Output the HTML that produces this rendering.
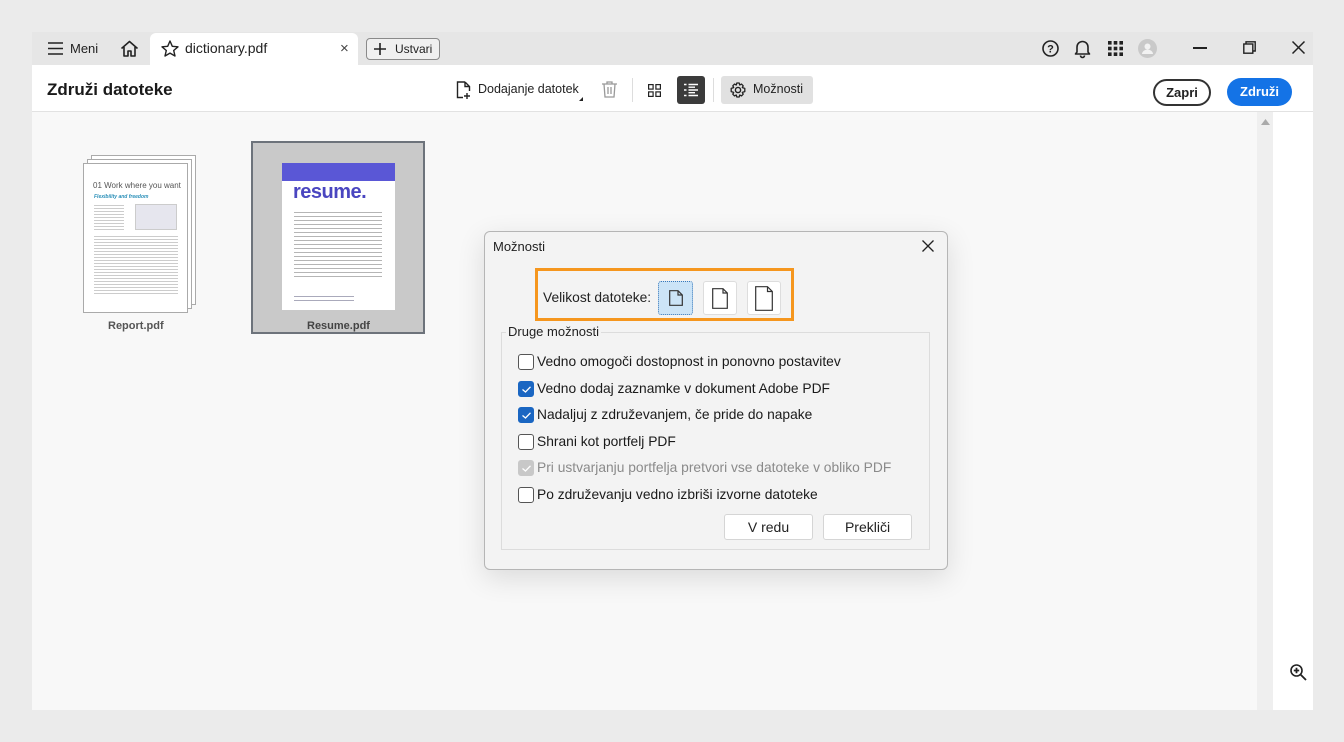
<!DOCTYPE html>
<html><head><meta charset="utf-8">
<style>
*{box-sizing:border-box;margin:0;padding:0}
body{width:1344px;height:742px;background:#ebebeb;font-family:"Liberation Sans",sans-serif;position:relative;overflow:hidden;color:#222}
.a{position:absolute}
.t{position:absolute;white-space:nowrap}
svg{position:absolute;overflow:visible}
.cb{position:absolute;left:518px;width:16px;height:16px;border:1px solid #555;border-radius:3px;background:#fff}
.cb.on{background:#1a66c2;border-color:#1a66c2}
.cb.dis{background:#c8c8c8;border-color:#c8c8c8}
.lbl{position:absolute;left:537px;font-size:13.8px;color:#1a1a1a;white-space:nowrap}
</style></head><body>
<div class="a" style="left:32px;top:32px;width:1281px;height:33px;background:#e6e6e6"></div>
<div class="a" style="left:32px;top:65px;width:1281px;height:47px;background:#fff;border-bottom:1px solid #e2e2e2"></div>
<div class="a" style="left:32px;top:112px;width:1225px;height:598px;background:#f8f8f8"></div>
<div class="a" style="left:1257px;top:112px;width:16px;height:598px;background:#efefef"></div>
<div class="a" style="left:1273px;top:112px;width:40px;height:598px;background:#fff"></div>
<svg style="left:1261px;top:119px" width="9" height="7"><path d="M0 6 L4.5 0 L9 6Z" fill="#aaa"/></svg>

<svg style="left:48px;top:42px" width="15" height="13"><path d="M0 1H15M0 6.5H15M0 12H15" stroke="#222" stroke-width="1.6"/></svg>
<div class="t" style="left:70px;top:41px;font-size:13px">Meni</div>
<svg style="left:120px;top:40px" width="19" height="17"><path d="M1.5 8.5L9.5 1.5L17.5 8.5M4 7V16H8V11H11V16H15V7" stroke="#222" stroke-width="1.6" fill="none" stroke-linejoin="round"/></svg>
<div class="a" style="left:150px;top:33px;width:208px;height:32px;background:#fff;border-radius:6px 6px 0 0"></div>
<svg style="left:161px;top:40px" width="18" height="17"><path d="M9 1L11.3 6.3L17 6.8L12.7 10.5L14 16L9 13.1L4 16L5.3 10.5L1 6.8L6.7 6.3Z" stroke="#222" stroke-width="1.4" fill="none" stroke-linejoin="round"/></svg>
<div class="t" style="left:185px;top:40px;font-size:14px">dictionary.pdf</div>
<div class="t" style="left:340px;top:40px;font-size:15px;color:#444">×</div>
<div class="a" style="left:366px;top:38px;width:74px;height:22px;border:1px solid #8a8a8a;border-radius:4px;background:#f0f0f0"></div>
<svg style="left:374px;top:43px" width="12" height="12"><path d="M6 0V12M0 6H12" stroke="#222" stroke-width="1.6"/></svg>
<div class="t" style="left:395px;top:42px;font-size:12px">Ustvari</div>

<svg style="left:1042px;top:40px" width="17" height="17"><circle cx="8.5" cy="8.5" r="7.5" stroke="#222" stroke-width="1.6" fill="none"/><text x="8.5" y="12.5" font-size="11" font-weight="bold" text-anchor="middle" font-family="Liberation Sans" fill="#222">?</text></svg>
<svg style="left:1074px;top:39px" width="17" height="19"><path d="M3 13V8a5.5 5.5 0 0 1 11 0v5l1.5 2H1.5Z M6.5 16.5a2 2 0 0 0 4 0" stroke="#222" stroke-width="1.6" fill="none" stroke-linejoin="round"/></svg>
<svg style="left:1108px;top:41px" width="15" height="15" fill="#222"><rect x="0" y="0" width="3.6" height="3.6"/><rect x="5.7" y="0" width="3.6" height="3.6"/><rect x="11.4" y="0" width="3.6" height="3.6"/><rect x="0" y="5.7" width="3.6" height="3.6"/><rect x="5.7" y="5.7" width="3.6" height="3.6"/><rect x="11.4" y="5.7" width="3.6" height="3.6"/><rect x="0" y="11.4" width="3.6" height="3.6"/><rect x="5.7" y="11.4" width="3.6" height="3.6"/><rect x="11.4" y="11.4" width="3.6" height="3.6"/></svg>
<svg style="left:1138px;top:39px" width="19" height="19"><circle cx="9.5" cy="9.5" r="9.5" fill="#c9c9c9"/><circle cx="9.5" cy="7.5" r="3" fill="#f2f2f2"/><path d="M4 15a5.5 4.5 0 0 1 11 0Z" fill="#f2f2f2"/></svg>
<div class="a" style="left:1193px;top:47px;width:14px;height:2px;background:#222"></div>
<svg style="left:1243px;top:41px" width="13" height="13"><rect x="0.8" y="3" width="9" height="9.2" stroke="#222" stroke-width="1.4" fill="none"/><path d="M3 3V0.8H12.2V10H10" stroke="#222" stroke-width="1.4" fill="none"/></svg>
<svg style="left:1292px;top:41px" width="13" height="13"><path d="M0.5 0.5L12.5 12.5M12.5 0.5L0.5 12.5" stroke="#222" stroke-width="1.5"/></svg>

<div class="t" style="left:47px;top:80px;font-size:17px;font-weight:bold;color:#1a1a1a">Združi datoteke</div>
<svg style="left:456px;top:81px" width="15" height="18"><path d="M9 1H1.5V16.5H7M9 1L13.5 5.5V10M9 1V5.5H13.5M11 12V18M8 15H14" stroke="#222" stroke-width="1.4" fill="none"/></svg>
<div class="t" style="left:478px;top:82px;font-size:12.5px">Dodajanje datotek</div>
<svg style="left:579px;top:97px" width="4" height="4"><path d="M4 0V4H0Z" fill="#222"/></svg>
<svg style="left:602px;top:81px" width="15" height="17"><path d="M0 3H15M5 3V1H10V3M2 3L3 16H12L13 3M6 6V13M9 6V13" stroke="#999" stroke-width="1.3" fill="none"/></svg>
<div class="a" style="left:632px;top:78px;width:1px;height:24px;background:#ddd"></div>
<svg style="left:648px;top:84px" width="13" height="13"><rect x="0.6" y="0.6" width="4.5" height="4.5" stroke="#222" stroke-width="1.2" fill="none"/><rect x="7.9" y="0.6" width="4.5" height="4.5" stroke="#222" stroke-width="1.2" fill="none"/><rect x="0.6" y="7.9" width="4.5" height="4.5" stroke="#222" stroke-width="1.2" fill="none"/><rect x="7.9" y="7.9" width="4.5" height="4.5" stroke="#222" stroke-width="1.2" fill="none"/></svg>
<div class="a" style="left:677px;top:76px;width:28px;height:28px;background:#3b3b3b;border-radius:3px"></div>
<svg style="left:684px;top:83px" width="14" height="14"><path d="M0 1.5H2.5M0 7H2.5M0 12.5H2.5M4.5 1.5H14M4.5 7H14M4.5 12.5H14M4.5 4.2H11M4.5 9.7H11" stroke="#fff" stroke-width="1.4"/></svg>
<div class="a" style="left:713px;top:78px;width:1px;height:24px;background:#ddd"></div>
<div class="a" style="left:721px;top:76px;width:92px;height:28px;background:#e1e1e1;border-radius:3px"></div>
<svg style="left:730px;top:82px" width="16" height="16"><circle cx="8" cy="8" r="2.6" stroke="#222" stroke-width="1.4" fill="none"/><path d="M6.8 1H9.2L9.7 3L11.5 2.1L13.2 3.8L12.3 5.6L14.8 6.4V9.6L12.3 10.4L13.2 12.2L11.5 13.9L9.7 13L9.2 15H6.8L6.3 13L4.5 13.9L2.8 12.2L3.7 10.4L1.2 9.6V6.4L3.7 5.6L2.8 3.8L4.5 2.1L6.3 3Z" stroke="#222" stroke-width="1.3" fill="none" stroke-linejoin="round"/></svg>
<div class="t" style="left:753px;top:82px;font-size:12.5px">Možnosti</div>
<div class="a" style="left:1153px;top:79px;width:58px;height:27px;border:2px solid #333;border-radius:14px;background:#fff;font-size:13px;font-weight:bold;text-align:center;line-height:23px">Zapri</div>
<div class="a" style="left:1227px;top:78px;width:65px;height:28px;background:#1473e6;border-radius:14px;color:#fff;font-size:13px;font-weight:bold;text-align:center;line-height:28px">Združi</div>

<div class="a" style="left:91px;top:155px;width:105px;height:150px;background:#fff;border:1px solid #aaa"></div>
<div class="a" style="left:87px;top:159px;width:105px;height:150px;background:#fff;border:1px solid #aaa"></div>
<div class="a" style="left:83px;top:163px;width:105px;height:150px;background:#fff;border:1px solid #aaa"></div>
<div class="t" style="left:93px;top:181px;font-size:8px;color:#555">01 Work where you want</div>
<div class="t" style="left:94px;top:194px;font-size:5px;color:#2a8fb8;font-style:italic;font-weight:bold">Flexibility and freedom</div>
<div class="a" style="left:135px;top:204px;width:42px;height:26px;background:#e6e6ee;border:1px solid #ccc"></div>
<div class="a" style="left:94px;top:203px;width:30px;height:28px;background:repeating-linear-gradient(#fff 0 2px,#ccc 2px 3px)"></div>
<div class="a" style="left:94px;top:234px;width:84px;height:60px;background:repeating-linear-gradient(#fff 0 2px,#ccc 2px 3px)"></div>
<div class="t" style="left:108px;top:320px;font-size:11px;font-weight:bold;color:#555">Report.pdf</div>

<div class="a" style="left:251px;top:141px;width:174px;height:193px;background:#c9c9c9;border:2px solid #6d737b"></div>
<div class="a" style="left:282px;top:163px;width:113px;height:147px;background:#fff"></div>
<div class="a" style="left:282px;top:163px;width:113px;height:18px;background:#5a57d6"></div>
<div class="t" style="left:293px;top:181px;font-size:20px;font-weight:bold;color:#4a46c0;letter-spacing:-0.5px">resume.</div>
<div class="a" style="left:294px;top:209px;width:88px;height:70px;background:repeating-linear-gradient(#fff 0 3px,#b5b5b5 3px 4px)"></div>
<div class="a" style="left:294px;top:293px;width:60px;height:9px;background:repeating-linear-gradient(#fff 0 3px,#aab 3px 4px)"></div>
<div class="t" style="left:307px;top:320px;font-size:11px;font-weight:bold;color:#444">Resume.pdf</div>

<div class="a" style="left:484px;top:231px;width:464px;height:339px;background:#f3f3f3;border:1px solid #b5b5b5;border-radius:6px;box-shadow:0 8px 28px rgba(0,0,0,0.12)"></div>
<div class="t" style="left:493px;top:239px;font-size:13px">Možnosti</div>
<svg style="left:922px;top:240px" width="12" height="12"><path d="M0.5 0.5L11.5 11.5M11.5 0.5L0.5 11.5" stroke="#222" stroke-width="1.3"/></svg>
<div class="a" style="left:535px;top:268px;width:259px;height:53px;border:3px solid #f5961e"></div>
<div class="t" style="left:543px;top:290px;font-size:13.8px">Velikost datoteke:</div>
<div class="a" style="left:658px;top:281px;width:35px;height:34px;background:#cce4f7;border:1px dotted #3a78b8;border-radius:3px"></div>
<div class="a" style="left:703px;top:281px;width:34px;height:34px;background:#fff;border:1px solid #ddd;border-radius:3px"></div>
<div class="a" style="left:747px;top:281px;width:34px;height:34px;background:#fff;border:1px solid #ddd;border-radius:3px"></div>
<svg style="left:669px;top:290px" width="14" height="16"><path d="M0.7 0.7H9L13.3 5V15.3H0.7Z M9 0.7V5H13.3" stroke="#333" stroke-width="1.2" fill="none"/></svg>
<svg style="left:712px;top:288px" width="16" height="21"><path d="M0.7 0.7H11L15.3 5V20.3H0.7Z M11 0.7V5H15.3" stroke="#333" stroke-width="1.2" fill="none"/></svg>
<svg style="left:755px;top:286px" width="18" height="25"><path d="M0.7 0.7H12.5L17.3 5.5V24.3H0.7Z M12.5 0.7V5.5H17.3" stroke="#333" stroke-width="1.2" fill="none"/></svg>
<div class="a" style="left:501px;top:332px;width:429px;height:218px;border:1px solid #dcdcdc"></div>
<div class="t" style="left:506px;top:324px;font-size:13px;background:#f3f3f3;padding:0 2px">Druge možnosti</div>

<div class="cb" style="top:354px"></div><div class="lbl" style="top:354px">Vedno omogoči dostopnost in ponovno postavitev</div>
<div class="cb on" style="top:381px"><svg style="left:3px;top:4px" width="9" height="7"><path d="M0.5 3.5L3.5 6L8.5 0.8" stroke="#fff" stroke-width="1.3" fill="none"/></svg></div><div class="lbl" style="top:381px">Vedno dodaj zaznamke v dokument Adobe PDF</div>
<div class="cb on" style="top:407px"><svg style="left:3px;top:4px" width="9" height="7"><path d="M0.5 3.5L3.5 6L8.5 0.8" stroke="#fff" stroke-width="1.3" fill="none"/></svg></div><div class="lbl" style="top:407px">Nadaljuj z združevanjem, če pride do napake</div>
<div class="cb" style="top:434px"></div><div class="lbl" style="top:434px">Shrani kot portfelj PDF</div>
<div class="cb dis" style="top:460px"><svg style="left:3px;top:4px" width="9" height="7"><path d="M0.5 3.5L3.5 6L8.5 0.8" stroke="#fff" stroke-width="1.3" fill="none"/></svg></div><div class="lbl" style="top:460px;color:#8a8a8a">Pri ustvarjanju portfelja pretvori vse datoteke v obliko PDF</div>
<div class="cb" style="top:487px"></div><div class="lbl" style="top:487px">Po združevanju vedno izbriši izvorne datoteke</div>

<div class="a" style="left:724px;top:514px;width:89px;height:26px;background:#fff;border:1px solid #d5d5d5;border-radius:3px;font-size:14px;text-align:center;line-height:24px">V redu</div>
<div class="a" style="left:823px;top:514px;width:89px;height:26px;background:#fff;border:1px solid #d5d5d5;border-radius:3px;font-size:14px;text-align:center;line-height:24px">Prekliči</div>

<svg style="left:1290px;top:664px" width="17" height="17"><circle cx="6.5" cy="6.5" r="5.5" stroke="#222" stroke-width="1.6" fill="none"/><path d="M6.5 3.8V9.2M3.8 6.5H9.2M10.5 10.5L16 16" stroke="#222" stroke-width="1.8"/></svg>
</body></html>
